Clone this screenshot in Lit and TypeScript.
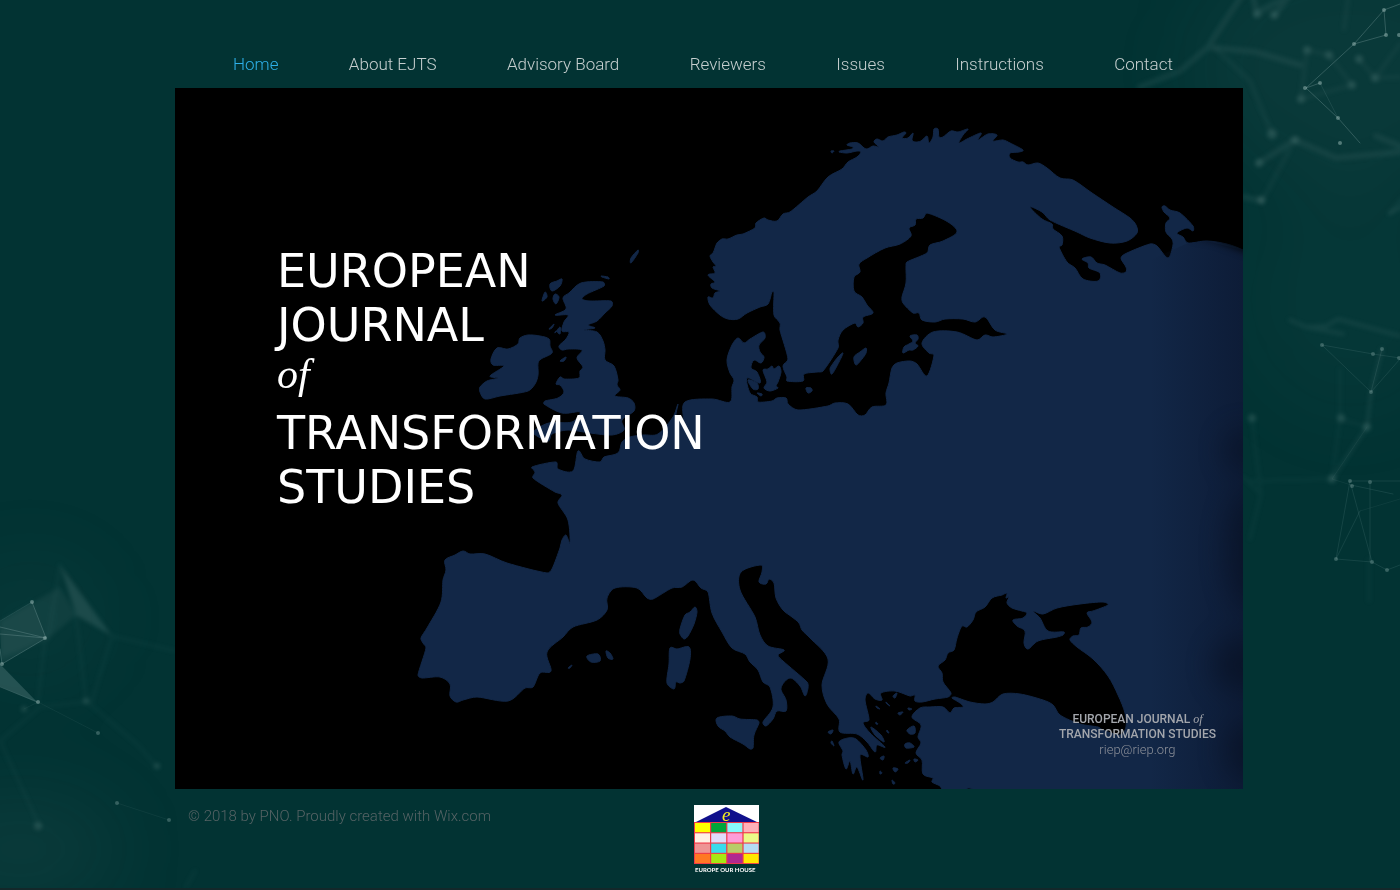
import { LitElement, html, svg, css } from "lit";
import { customElement } from "lit/decorators.js";

const MAINLAND = `708 275 715 273 713 267 716 266 713 262 710 256 713 253 715 248 717 243 722 239 728 239 737 235 743 234 755 228 756 223 764 218 768 220 777 221 783 214 790 212 808 197 817 191 828 177 842 169 848 162 857 157 861 152 857 151 847 153 839 152 840 151 852 149 853 147 847 145 850 143 858 143 866 149 873 146 879 147 874 142 877 139 883 141 888 137 897 135 904 132 906 133 902 138 908 138 913 133 912 140 915 142 921 141 927 136 929 143 933 137 934 129 938 129 939 137 943 137 951 131 958 132 968 129 963 135 959 143 967 139 981 133 978 140 988 134 997 135 993 141 1003 140 1010 143 1023 150 1019 152 1010 153 1010 158 1018 162 1023 162 1028 165 1038 163 1047 168 1060 178 1073 180 1092 193 1113 207 1130 218 1136 225 1137 233 1127 241 1110 243 1090 238 1077 232 1050 220 1042 212 1030 207 1042 219 1052 224 1053 229 1062 236 1062 245 1059 247 1067 262 1075 268 1083 279 1098 281 1100 273 1089 268 1088 263 1082 259 1091 257 1097 263 1105 265 1120 273 1126 272 1126 267 1121 258 1127 253 1150 244 1157 246 1168 258 1173 245 1172 239 1166 232 1166 223 1170 218 1164 212 1162 207 1165 206 1170 210 1180 213 1193 226 1193 231 1187 228 1177 233 1183 237 1188 243 1207 241 1227 244 1243 250 1260 260 1260 800 973 800 973 790 968 788 966 790 943 790 940 786 932 782 933 778 923 774 922 760 916 753 921 743 918 737 921 725 912 717 920 708 930 707 943 707 950 713 954 708 963 707 960 703 952 698 955 697 970 702 985 704 993 702 1003 694 1020 694 1043 700 1053 705 1060 715 1080 724 1098 727 1103 730 1120 735 1126 727 1125 713 1118 695 1108 676 1093 659 1077 647 1070 640 1073 636 1079 635 1081 628 1088 627 1092 622 1087 613 1093 611 1108 605 1103 602 1080 604 1057 608 1043 614 1033 611 1040 618 1048 631 1064 632 1063 635 1057 637 1038 641 1028 649 1024 643 1025 631 1017 626 1013 620 1023 618 1027 613 1022 611 1012 608 1007 603 1009 597 1006 598 1007 593 1002 595 992 598 985 607 976 612 973 620 967 627 962 626 957 638 954 650 948 653 945 660 938 666 942 673 943 682 951 693 948 697 935 699 922 702 915 701 915 695 910 696 895 691 881 693 882 700 875 699 868 693 865 700 869 720 863 723 870 733 885 747 877 745 875 752 867 742 857 734 840 732 839 719 827 704 822 685 828 659 810 638 802 630 799 623 792 617 783 610 776 598 774 583 769 579 766 584 759 582 762 572 761 565 741 572 740 590 755 617 760 635 768 646 784 650 778 655 783 661 807 682 808 688 805 696 800 686 790 678 781 688 786 700 786 711 777 711 773 719 766 726 763 722 773 707 770 687 763 682 758 670 750 662 745 654 732 648 722 632 712 613 708 592 701 588 693 580 682 587 672 588 653 599 647 598 637 588 615 588 607 598 607 610 597 620 573 627 563 637 547 652 551 671 540 673 533 687 525 688 508 701 477 697 463 700 456 702 450 696 450 684 440 677 422 678 418 675 426 648 423 643 421 638 427 628 441 602 443 580 446 570 445 560 455 555 463 551 470 554 485 554 507 563 547 573 552 569 560 548 562 540 566 535 570 543 568 520 558 503 562 495 555 492 533 478 535 472 532 467 556 462 558 469 573 471 578 451 585 459 600 462 604 457 618 453 622 442 630 437 643 435 658 434 673 417 678 404 676 417 683 420 685 402 712 399 730 402 732 387 734 380 730 373 727 360 732 345 738 338 744 343 750 339 763 332 765 338 759 345 760 352 764 357 761 363 754 360 751 368 757 372 760 383 747 378 750 393 757 397 758 402 772 401 777 398 786 398 788 404 798 410 828 406 835 403 848 404 858 415 865 415 872 407 886 405 886 393 889 383 892 368 897 363 910 361 917 364 927 376 934 355 929 353 922 343 933 332 957 332 977 340 985 335 993 337 1007 334 995 330 985 317 975 322 963 319 945 319 935 322 922 320 919 313 913 313 903 303 902 297 906 283 906 267 907 262 927 253 930 245 943 241 957 232 948 222 927 213 923 218 916 219 915 225 909 228 911 236 900 244 885 248 867 258 859 264 860 272 854 277 854 291 862 297 867 305 873 313 863 317 863 323 858 327 855 323 843 330 838 340 838 348 823 371 817 372 804 374 803 381 787 381 787 377 783 366 788 359 780 330 780 323 774 315 774 292 772 292 768 304 760 307 747 313 738 319 728 319 720 315 710 305 708 297 713 298 715 293 720 291 712 288 711 284 715 282`;

const ISLANDS = [
  // Great Britain
  `581 283 603 282 604 286 587 294 582 299 590 301 611 301 612 306 605 313 597 321 588 325 595 328 584 330 597 332 603 341 605 350 605 360 614 366 618 380 617 385 620 390 615 396 628 398 634 403 634 411 622 420 624 430 612 435 590 433 568 430 552 434 548 441 534 434 535 430 549 423 572 422 580 412 562 413 544 404 545 401 558 398 564 392 560 385 556 384 560 377 564 379 579 378 580 371 583 367 577 358 582 350 568 349 562 350 559 346 566 339 569 332 562 331 564 322 568 315 555 315 566 309 563 298 569 293`,
  // Ireland
  `497 348 508 349 518 344 520 338 528 335 540 336 549 339 550 346 552 353 541 359 538 363 538 375 535 384 528 391 500 396 485 399 480 392 480 387 487 381 498 378 490 376 504 366 493 365 491 359`,
  // Scottish isles
  `550 284 557 281 562 279 560 286 552 291`,
  `545 292 547 297 542 301`,
  `555 294 559 297 556 304 553 299`,
  `549 329 554 324 552 328`,
  `555 333 560 327 560 334 556 331`,
  `560 361 566 357 564 361`,
  `601 276 608 277 609 279 602 277`,
  `631 258 638 250 638 253 631 263`,
  // Zealand, Funen and the small Danish isles
  `763 370 768 369 772 366 774 369 779 366 781 372 778 382 776 386 778 388 770 391 764 388 767 382`,
  `757 393 762 394 761 396`,
  `748 380 757 383 758 389 753 389`,
  `806 388 811 388 812 391 808 393`,
  // Swedish and Estonian isles
  `830 369 832 365 838 357 843 353 839 362 832 374`,
  `854 357 860 352 866 348 866 353 862 359 856 365`,
  `910 336 917 335 918 339 915 343 918 346 913 350 909 350 903 353 904 347 909 344 913 341`,
  // Lofoten
  `831 151 834 151 832 153`,
  // Corsica and Sardinia
  `690 612 695 607 697 612 694 624 688 636 684 639 680 634 680 629 685 615`,
  `670 648 677 649 689 647 690 659 684 681 680 683 676 682 674 689 667 683 669 664`,
  // Balearics
  `587 656 598 654 600 661 591 662`,
  `606 651 610 653 613 659 608 658`,
  `568 668 572 665 570 668`,
  // Sicily
  `717 718 732 716 740 719 757 720 759 723 754 735 753 748 750 749 743 744 730 737 725 731 718 726`,
  // Peloponnese
  `839 742 848 738 856 739 866 750 868 757 860 755 863 780 857 767 853 774 850 761 846 769 842 755 843 751`,
  // Aegean
  `871 727 881 735 884 742 875 735`,
  `828 732 833 730 831 734`,
  `832 741 834 746 831 743`,
  `893 696 897 693 895 698`,
  `886 702 890 706 887 704`,
  `876 706 880 709 877 708`,
  `898 713 903 712 900 715`,
  `908 708 912 709 909 710`,
  `907 730 914 726 915 733 910 734`,
  `905 744 910 743 914 747 906 748`,
  `880 758 884 756 883 760`,
  `905 763 910 760 908 763`,
  `914 759 918 760 915 762`,
  `893 768 898 769 895 772`,
  `880 771 882 773 880 774`,
  `892 780 895 783 893 784`,
  `887 730 889 733 887 732`,
  `876 722 878 724 876 724`,
];

/** Turns a flat "x y x y" list into a closed curve through every point. */
function coast(list: string): string {
  const n = list.split(" ").map(Number);
  const count = n.length / 2;
  const at = (i: number) => {
    const k = ((i + count) % count) * 2;
    return [n[k], n[k + 1]];
  };
  let d = `M${n[0]} ${n[1]}`;
  for (let i = 0; i < count; i++) {
    const [a, b, c, e] = [at(i - 1), at(i), at(i + 1), at(i + 2)];
    const len = Math.hypot(c[0] - b[0], c[1] - b[1]);
    // Handles never exceed a third of their own segment, so long neighbours cannot cause loops.
    const handle = (p: number[], q: number[]) => {
      const dx = q[0] - p[0];
      const dy = q[1] - p[1];
      const k = Math.min(1 / 6, len / 3 / (Math.hypot(dx, dy) || 1));
      return [dx * k, dy * k];
    };
    const h1 = handle(a, c);
    const h2 = handle(b, e);
    d += `C${(b[0] + h1[0]).toFixed(1)} ${(b[1] + h1[1]).toFixed(1)} ${(c[0] - h2[0]).toFixed(1)} ${(c[1] - h2[1]).toFixed(1)} ${c[0]} ${c[1]}`;
  }
  return d + "Z";
}

const LINKS = ["Home", "About EJTS", "Advisory Board", "Reviewers", "Issues", "Instructions", "Contact"];

const TILES = [
  ["#ffff00", "#00a53a", "#88f8fa", "#ffb0b8"],
  ["#fff0e4", "#e0dcfa", "#ff9cd8", "#ecfa88"],
  ["#ee9494", "#38dcec", "#b8cc68", "#b4dcf4"],
  ["#ff7824", "#a6e812", "#b02890", "#ffe800"],
];

@customElement("journal-backdrop")
class JournalBackdrop extends LitElement {
  static styles = css`
    :host { display: block; overflow: hidden; }
    .art { display: block; width: 100%; height: 100%; }
    .line { fill: none; stroke: #719494; stroke-linecap: round; }
    .sheet { fill: #719494; }
    .dot { fill: #91b1ae; }
  `;
  render() {
    return html`<svg class="art" viewBox="0 0 1400 890" preserveAspectRatio="xMidYMid slice" aria-hidden="true">
      <defs>
        <filter id="soft" x="-20%" y="-20%" width="140%" height="140%" color-interpolation-filters="sRGB"><feGaussianBlur stdDeviation="2"/></filter>
        <filter id="haze" x="-50%" y="-50%" width="200%" height="200%" color-interpolation-filters="sRGB"><feGaussianBlur stdDeviation="40"/></filter>
      </defs>
      <g class="sheet" filter="url(#haze)">
        <ellipse cx="1350" cy="70" rx="160" ry="120" opacity=".07"/>
        <ellipse cx="1350" cy="300" rx="110" ry="120" opacity=".04"/>
        <ellipse cx="20" cy="850" rx="100" ry="50" opacity=".09"/>
        <ellipse cx="30" cy="620" rx="70" ry="60" opacity=".05"/>
      </g>
      <g filter="url(#soft)">
        <g class="line" stroke-width="6" opacity=".12">
          <path d="M1140 88L1180 72 1208 48 1245 -8M1208 48L1256 53 1300 66M1252 -6L1257 14 1290 -4M1275 16L1292 -8M1259 164L1295 141 1336 159 1400 153M1376 137L1400 147M1244 198L1262 202"/>
        </g>
        <g class="line" stroke-width="5" opacity=".07">
          <path d="M1216 50L1250 82 1272 135M1262 202L1290 150M1307 51L1329 56 1352 86M1307 51L1301 100 1352 86M1359 60L1375 79 1400 78M1375 79L1400 45M1390 214L1402 200M1348 0L1344 30"/>
        </g>
        <g class="line" stroke-width="4" opacity=".12">
          <path d="M1290 321L1306 328 1326 327 1338 320 1400 337M1306 328L1343 335M1382 350L1371 393 1367 428 1332 480M1390 214L1402 208"/>
        </g>
        <g class="line" stroke-width="4" opacity=".05">
          <path d="M1340 370L1340 420 1367 428M1340 420L1332 480M1252 420L1261 495 1250 540M1243 478L1261 495M1332 480L1250 482M1369 560V602"/>
          <path d="M76 616L86 702 138 746 157 768M112 637L92 702 40 708 0 742M112 637L175 652M0 742L40 828M186 888L195 872M45 640L38 703M60 566L48 640"/>
        </g>
        <path class="sheet" opacity=".22" d="M60 566L112 637 76 616Z"/>
        <path class="sheet" opacity=".1" d="M0 622L60 588 76 616 48 640 0 660Z"/>
        <g class="dot" opacity=".18">
          <circle cx="1257" cy="15" r="4"/><circle cx="1274" cy="16" r="4"/><circle cx="1307" cy="51" r="4"/><circle cx="1329" cy="56" r="4"/>
          <circle cx="1359" cy="60" r="4"/><circle cx="1375" cy="79" r="4"/><circle cx="1352" cy="86" r="4"/><circle cx="1295" cy="141" r="4"/>
          <circle cx="1259" cy="164" r="4"/><circle cx="1261" cy="201" r="4"/><circle cx="1272" cy="135" r="5"/><circle cx="1301" cy="100" r="4"/>
          <circle cx="1341" cy="419" r="4"/><circle cx="1367" cy="428" r="4"/><circle cx="1252" cy="419" r="4"/><circle cx="1332" cy="480" r="4"/>
          <circle cx="38" cy="827" r="4"/><circle cx="24" cy="710" r="3"/><circle cx="86" cy="702" r="3"/><circle cx="157" cy="767" r="3"/>
        </g>
      </g>
      <g class="sheet">
        <path opacity=".1" d="M0 622L32 603 46 639 0 630Z"/>
        <path opacity=".3" d="M0 665L38 704 0 688Z"/>
        <path opacity=".12" d="M0 630L46 639 2 665Z"/>
      </g>
      <path class="line" opacity=".4" d="M1400 5L1384 11 1354 45 1306 89 1338 119 1360 144M1384 11L1386 36 1354 45M1306 89L1320 84M0 628L46 639 2 665 0 650M0 635L46 639 32 603"/>
      <path class="line" opacity=".18" d="M1320 84L1338 119M1322 346L1373 355 1400 359M1322 346L1371 393 1400 360M1382 350L1371 393M1350 482H1400M1350 482L1336 560 1372 563 1387 571 1400 566M1351 486L1372 563M1351 486L1393 495M1370 484V563M1336 560L1360 512M0 622L32 603M38 703L0 688"/>
      <path class="line" opacity=".1" d="M24 710L38 703 98 734M117 804L169 821M1367 428L1332 480 1351 486M1360 512L1400 500"/>
      <g class="dot" opacity=".55">
        <circle cx="1384" cy="11" r="2"/><circle cx="1386" cy="36" r="2"/><circle cx="1354" cy="45" r="2"/><circle cx="1305" cy="89" r="2"/>
        <circle cx="1320" cy="84" r="2"/><circle cx="1338" cy="119" r="2"/><circle cx="1340" cy="144" r="2"/><circle cx="1399" cy="36" r="2"/>
        <circle cx="32" cy="603" r="2"/><circle cx="45" cy="639" r="2"/><circle cx="2" cy="665" r="2"/><circle cx="38" cy="703" r="2"/>
      </g>
      <g class="dot" opacity=".35">
        <circle cx="1322" cy="346" r="2"/><circle cx="1373" cy="355" r="2"/><circle cx="1382" cy="350" r="2"/><circle cx="1371" cy="393" r="2"/>
        <circle cx="1350" cy="482" r="2"/><circle cx="1352" cy="487" r="2"/><circle cx="1370" cy="483" r="2"/><circle cx="1336" cy="560" r="2"/>
        <circle cx="1372" cy="563" r="2"/><circle cx="1387" cy="571" r="2"/><circle cx="1399" cy="359" r="2"/>
        <circle cx="98" cy="734" r="2"/><circle cx="117" cy="804" r="2"/><circle cx="169" cy="821" r="2"/>
      </g>
    </svg>`;
  }
}

@customElement("europe-map")
class EuropeMap extends LitElement {
  static styles = css`
    :host { display: block; overflow: hidden; }
    .map { display: block; width: 100%; height: 100%; }
    .land { fill: #122747; stroke: #122747; stroke-width: 1; stroke-linejoin: round; }
  `;
  render() {
    return html`<svg class="map" viewBox="175 88 1068 701" preserveAspectRatio="xMaxYMid slice" role="img" aria-label="Map of Europe">
      <defs>
        <filter id="blur" filterUnits="userSpaceOnUse" x="1100" y="150" width="250" height="700" color-interpolation-filters="sRGB"><feGaussianBlur stdDeviation="14"/></filter>
        <filter id="edge" filterUnits="userSpaceOnUse" x="1150" y="200" width="150" height="80" color-interpolation-filters="sRGB"><feGaussianBlur stdDeviation="4"/></filter>
        <linearGradient id="fade"><stop offset="0" stop-color="#0b1730" stop-opacity="0"/><stop offset="1" stop-color="#0b1730" stop-opacity=".7"/></linearGradient>
      </defs>
      <path class="land" d=${coast(MAINLAND)}/>
      ${ISLANDS.map((d) => svg`<path class="land" d=${coast(d)}/>`)}
      <path fill="url(#fade)" d="M1150 260L1188 243 1207 241 1243 250V789H1150Z"/>
      <path filter="url(#edge)" d="M1190 236L1215 240 1243 250 1260 256V236Z"/>
      <g filter="url(#blur)" fill="#081124" opacity=".7">
        <ellipse cx="1246" cy="450" rx="20" ry="20"/>
        <ellipse cx="1252" cy="550" rx="24" ry="60"/>
        <ellipse cx="1244" cy="665" rx="30" ry="28"/>
        <ellipse cx="1250" cy="750" rx="24" ry="30"/>
      </g>
    </svg>`;
  }
}

@customElement("app-root")
class AppRoot extends LitElement {
  static styles = css`
    :host {
      display: block;
      position: relative;
      min-height: 100vh;
      box-sizing: border-box;
      background: #023333;
      border-bottom: 2px solid #13282a;
      font-family: Roboto, "Liberation Sans", sans-serif;
      font-weight: 300;
    }
    a { color: inherit; text-decoration: none; }
    .backdrop { position: absolute; inset: 0; }
    .shell { position: relative; max-width: 1068px; margin: 0 auto; padding-left: 18px; }
    .nav { display: flex; justify-content: space-between; height: 48px; padding: 40px 70px 0 58px; line-height: 48px; font-size: 17px; color: #c6cfcf; white-space: nowrap; }
    .nav .current { color: #2eb0ea; }
    .hero { position: relative; display: flex; flex-direction: column; justify-content: space-between; min-height: 701px; box-sizing: border-box; padding: 156px 27px 32px 102px; background: #000; }
    .map { position: absolute; inset: 0; }
    .title { position: relative; margin: 0; font: 400 46px/54px "DejaVu Sans", sans-serif; color: #fff; }
    .line { display: block; }
    .of { font-family: "Liberation Serif", serif; font-style: italic; font-weight: 400; }
    .title .of { font-size: 42px; line-height: 44px; padding-bottom: 10px; }
    .contact { position: relative; align-self: flex-end; font-style: normal; font-size: 13px; line-height: 15px; text-align: center; color: #8b8f98; }
    .name { display: block; font-size: 12px; font-weight: 500; color: #a3a6ac; }
    .footer { display: grid; grid-template-columns: 506px 1fr; align-items: start; padding: 16px 13px 14px; font-size: 15px; line-height: 22px; color: #566365; }
    .note { margin: 0; }
    .logo { display: block; width: 66px; height: 69px; }
    .caption { font: 700 6px Lato, sans-serif; fill: #fff; }
    .initial { font: italic 400 19px "Liberation Serif", serif; fill: #f7ee20; }
  `;
  render() {
    return html`
      <journal-backdrop class="backdrop"></journal-backdrop>
      <div class="shell">
        <nav class="nav" aria-label="Main">
          ${LINKS.map((label, i) => html`<a class=${i === 0 ? "current" : "item"} href="#">${label}</a>`)}
        </nav>
        <main class="hero">
          <europe-map class="map"></europe-map>
          <h1 class="title">
            <span class="line">EUROPEAN</span><span class="line">JOURNAL</span><span class="line of">of</span><span class="line">TRANSFORMATION</span><span class="line">STUDIES</span>
          </h1>
          <address class="contact">
            <span class="name">EUROPEAN JOURNAL <span class="of">of</span><br>TRANSFORMATION STUDIES</span>
            <a href="mailto:riep@riep.org">riep@riep.org</a>
          </address>
        </main>
        <footer class="footer">
          <p class="note">© 2018 by PNO. Proudly created with <a href="#">Wix.com</a></p>
          <svg class="logo" viewBox="0 0 66 69" role="img" aria-label="Europe Our House">
            <path fill="#fff" d="M0 0H65V18H0Z"/>
            <path fill="#10108c" d="M0 18L32 2 65 18Z"/>
            <path fill="#f03848" d="M0 17H65V59H0Z"/>
            ${TILES.map((row, r) => row.map((c, i) => svg`<rect x=${1 + i * 16.2} y=${18 + r * 10.3} width="15" height="9.2" fill=${c}/>`))}
            <text class="initial" x="28" y="16">e</text>
            <text class="caption" x="1" y="67">EUROPE OUR HOUSE</text>
          </svg>
        </footer>
      </div>`;
  }
}
